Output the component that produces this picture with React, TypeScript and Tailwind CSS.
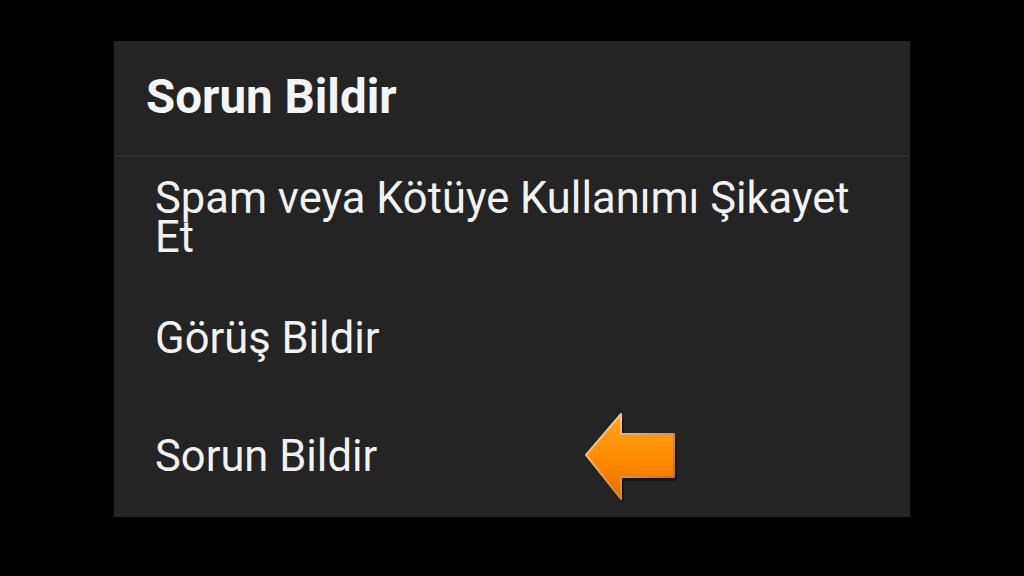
import React from 'react';

function OrangeArrow() {
  return (
    <svg width="96" height="92" viewBox="0 0 96 92" className="shrink-0">
      <defs>
        <linearGradient id="arrowFill" x1="0" y1="0" x2="0" y2="1">
          <stop offset="0%" stopColor="#ffa41c" />
          <stop offset="55%" stopColor="#ff8a00" />
          <stop offset="100%" stopColor="#e86a00" />
        </linearGradient>
        <linearGradient id="arrowEdge" x1="0" y1="0" x2="1" y2="1">
          <stop offset="0%" stopColor="#ffe3a8" />
          <stop offset="100%" stopColor="#c45a00" />
        </linearGradient>
      </defs>
      <polygon
        points="4,45 39,4 39,24 92,24 92,67 39,67 39,89"
        fill="#000"
        opacity="0.35"
        transform="translate(1,2)"
      />
      <polygon
        points="2,43 37,2 37,22 90,22 90,65 37,65 37,87"
        fill="url(#arrowFill)"
        stroke="url(#arrowEdge)"
        strokeWidth="2"
        strokeLinejoin="round"
      />
    </svg>
  );
}

function Item({ children, height }: { children: React.ReactNode; height: string }) {
  return (
    <div className={`flex items-center pl-[41px] pr-[40px] ${height}`}>
      <span className="text-[43.5px] leading-[39px] text-[#f2f2f2]">{children}</span>
    </div>
  );
}

export default function App() {
  return (
    <div
      className="flex h-[576px] w-[1024px] items-start justify-center bg-black pt-[41px]"
      style={{ fontFamily: 'Roboto, "Noto Sans", sans-serif' }}
    >
      <div className="flex h-[476px] w-[796px] flex-col bg-[#242424]">
        <div className="flex h-[116px] items-center border-b-2 border-[#2f2f2f] pl-[32px]">
          <h1 className="text-[47.5px] font-bold leading-none text-[#f5f5f5]">Sorun Bildir</h1>
        </div>
        <Item height="h-[122px]">Spam veya Kötüye Kullanımı Şikayet Et</Item>
        <Item height="h-[119px]">Görüş Bildir</Item>
        <div className="flex h-[117px] items-center pl-[41px]">
          <span className="text-[43.5px] leading-[39px] text-[#f2f2f2]">Sorun Bildir</span>
          <div className="ml-[207px] mt-[2px]">
            <OrangeArrow />
          </div>
        </div>
      </div>
    </div>
  );
}
